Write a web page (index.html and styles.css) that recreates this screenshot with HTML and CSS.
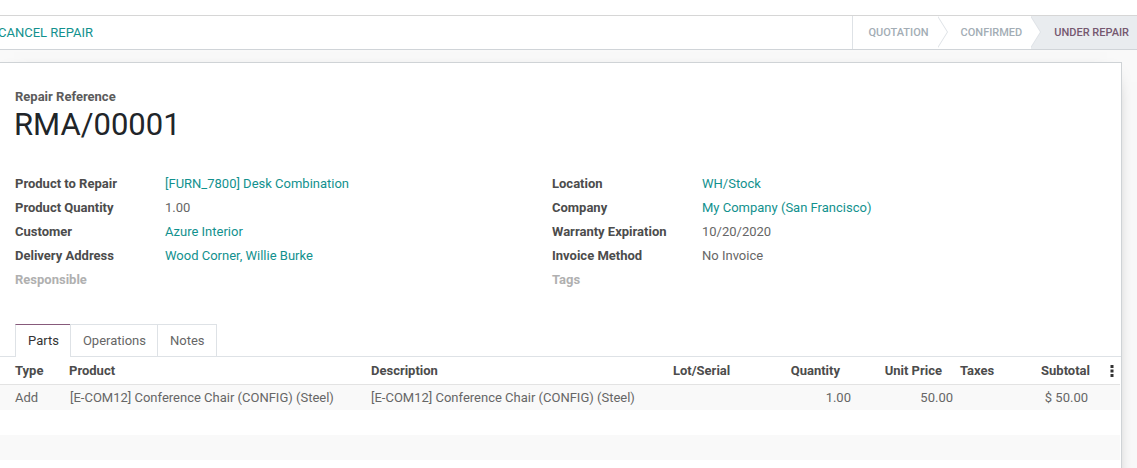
FILE: index.html
```html
<!DOCTYPE html>
<html lang="en">
<head>
    <meta charset="UTF-8">
    <title>RMA/00001 - Repair</title>
    <link rel="stylesheet" href="styles.css">
</head>
<body>
    <div class="top-band"></div>

    <!-- Barre de statut -->
    <div class="statusbar">
        <div class="statusbar-buttons">
            <button class="btn-cancel">Cancel Repair</button>
        </div>
        <div class="statusbar-status">
            <span class="step first">Quotation</span>
            <span class="step">Confirmed</span>
            <span class="step current">Under Repair</span>
        </div>
    </div>

    <div class="form-view">
        <div class="sheet">
            <div class="title">
                <label class="title-label">Repair Reference</label>
                <h1>RMA/00001</h1>
            </div>

            <div class="groups">
                <div class="group">
                    <div class="field-label">Product to Repair</div>
                    <div class="field-value link">[FURN_7800] Desk Combination</div>
                    <div class="field-label">Product Quantity</div>
                    <div class="field-value">1.00</div>
                    <div class="field-label">Customer</div>
                    <div class="field-value link">Azure Interior</div>
                    <div class="field-label">Delivery Address</div>
                    <div class="field-value link">Wood Corner, Willie Burke</div>
                    <div class="field-label muted">Responsible</div>
                    <div class="field-value"></div>
                </div>
                <div class="group">
                    <div class="field-label">Location</div>
                    <div class="field-value link">WH/Stock</div>
                    <div class="field-label">Company</div>
                    <div class="field-value link">My Company (San Francisco)</div>
                    <div class="field-label">Warranty Expiration</div>
                    <div class="field-value">10/20/2020</div>
                    <div class="field-label">Invoice Method</div>
                    <div class="field-value">No Invoice</div>
                    <div class="field-label muted">Tags</div>
                    <div class="field-value"></div>
                </div>
            </div>

            <!-- Onglets -->
            <div class="notebook">
                <div class="tabs">
                    <span class="tab active">Parts</span>
                    <span class="tab">Operations</span>
                    <span class="tab">Notes</span>
                </div>

                <table class="list">
                    <colgroup>
                        <col style="width: 61px">
                        <col style="width: 302px">
                        <col style="width: 302px">
                        <col style="width: 100px">
                        <col style="width: 94px">
                        <col style="width: 94px">
                        <col style="width: 57px">
                        <col style="width: 90px">
                        <col style="width: 20px">
                    </colgroup>
                    <thead>
                        <tr>
                            <th>Type</th>
                            <th>Product</th>
                            <th>Description</th>
                            <th>Lot/Serial</th>
                            <th class="num qty">Quantity</th>
                            <th class="num price">Unit Price</th>
                            <th class="taxes">Taxes</th>
                            <th class="num subtotal">Subtotal</th>
                            <th class="opt">
                                <svg width="4" height="12" viewBox="0 0 4 12"><rect x="0.5" y="0" width="3" height="3"/><rect x="0.5" y="4.5" width="3" height="3"/><rect x="0.5" y="9" width="3" height="3"/></svg>
                            </th>
                        </tr>
                    </thead>
                    <tbody>
                        <tr>
                            <td>Add</td>
                            <td class="prod">[E-COM12] Conference Chair (CONFIG) (Steel)</td>
                            <td>[E-COM12] Conference Chair (CONFIG) (Steel)</td>
                            <td></td>
                            <td class="num qty">1.00</td>
                            <td class="num price">50.00</td>
                            <td class="taxes"></td>
                            <td class="num subtotal">$ 50.00</td>
                            <td></td>
                        </tr>
                        <tr class="empty"><td colspan="9"></td></tr>
                        <tr class="empty"><td colspan="9"></td></tr>
                        <tr class="empty"><td colspan="9"></td></tr>
                    </tbody>
                </table>
            </div>
        </div>
    </div>
</body>
</html>
```

FILE: styles.css
```css
body {
    font-family: Roboto, "Liberation Sans", sans-serif;
    font-size: 13px;
    color: #4c4c4c;
    margin: 0;
    padding: 0;
    height: 468px;
    overflow: hidden;
    background-color: #fff;
}
.top-band {
    height: 15px;
    border-bottom: 1px solid #d6d6d6;
}
.statusbar {
    display: flex;
    justify-content: space-between;
    align-items: stretch;
    height: 33px;
    border-bottom: 1px solid #d0d4d8;
    background-color: #fff;
}
.statusbar-buttons {
    display: flex;
    align-items: center;
}
.btn-cancel {
    font-family: inherit;
    font-size: 13px;
    text-transform: uppercase;
    color: #12918e;
    background: none;
    border: none;
    padding: 0;
    margin-left: -2px;
    cursor: pointer;
}
.statusbar-status {
    display: flex;
}
.step {
    position: relative;
    display: flex;
    align-items: center;
    padding: 0 9px 0 23px;
    font-size: 11px;
    font-weight: 500;
    text-transform: uppercase;
    color: #a3adb5;
}
.step.first {
    padding: 0 9px 0 15px;
    border-left: 1px solid #dee2e6;
}
.step.current {
    padding-right: 8px;
}
/* chevrons entre les étapes */
.step:not(.current)::before,
.step:not(.current)::after {
    content: "";
    position: absolute;
    top: 0;
    z-index: 2;
    border-top: 16.5px solid transparent;
    border-bottom: 16.5px solid transparent;
    border-left: 10px solid #dee2e6;
}
.step:not(.current)::before {
    right: -10px;
}
.step:not(.current)::after {
    right: -9px;
    border-left-color: #fff;
}
.step.current {
    background-color: #e9ecef;
    color: #75586f;
}
.form-view {
    background-color: #f9f9f9;
    padding-top: 12px;
    height: 100%;
}
.sheet {
    margin-left: -1px;
    margin-right: 15px;
    background-color: #fff;
    border: 1px solid #cfd3d6;
    box-shadow: 0 5px 20px -15px #000;
    padding: 24px 0 0 0;
    min-height: 500px;
}
.title {
    padding-left: 15px;
}
.title-label {
    display: block;
    font-weight: bold;
    line-height: 19px;
    color: #5b5b5b;
}
.title h1 {
    font-size: 31px;
    font-weight: 400;
    line-height: 36px;
    margin: 1px 0 0 -1px;
    color: #212529;
}
.groups {
    display: grid;
    grid-template-columns: 537px 1fr;
    margin-top: 28px;
    padding-left: 15px;
}
.group {
    display: grid;
    grid-template-columns: 150px 1fr;
    grid-auto-rows: 24px;
    align-items: center;
}
.field-label {
    font-weight: bold;
    color: #4c4c4c;
}
.field-label.muted {
    color: #b0b0b0;
}
.field-value {
    color: #666;
}
.field-value.link {
    color: #12918e;
}
.notebook {
    margin-top: 33px;
}
.tabs {
    display: flex;
    padding-left: 15px;
    border-bottom: 1px solid #dee2e6;
}
.tab {
    height: 31px;
    line-height: 31px;
    padding: 0 11px 0 12px;
    border: 1px solid #dee2e6;
    border-bottom: none;
    margin-bottom: -1px;
    margin-right: -1px;
    color: #666;
    background-color: #fff;
}
.tab.active {
    border-top: 1px solid #875a7b;
    color: #333;
    height: 32px;
}
.list {
    width: 1120px;
    table-layout: fixed;
    border-collapse: collapse;
}
.list th {
    height: 27px;
    padding: 0 8px;
    text-align: left;
    font-weight: bold;
    color: #4c4c4c;
    border-bottom: 1px solid #e3e3e3;
    box-shadow: 0 2px 2px -1px rgba(0, 0, 0, 0.05);
    white-space: nowrap;
}
.list th:first-child,
.list td:first-child {
    padding-left: 15px;
}
.list td {
    height: 25px;
    padding: 0 8px;
    color: #666;
    white-space: nowrap;
    overflow: hidden;
}
.list td.prod {
    padding-left: 9px;
}
.list tbody tr:nth-child(odd) {
    background-color: #f9f9f9;
}
.list .num {
    text-align: right;
}
.list th.qty {
    padding-right: 19px;
}
.list td.qty {
    padding-right: 8px;
}
.list th.price {
    padding-right: 11px;
}
.list td.price {
    padding-right: 0;
}
.list .taxes {
    padding-left: 7px;
}
.list th.subtotal {
    padding-right: 10px;
}
.list td.subtotal {
    padding-right: 12px;
}
.list th.opt {
    padding: 0 0 0 10px;
    line-height: 0;
}
.list th.opt svg {
    fill: #333;
}
```
